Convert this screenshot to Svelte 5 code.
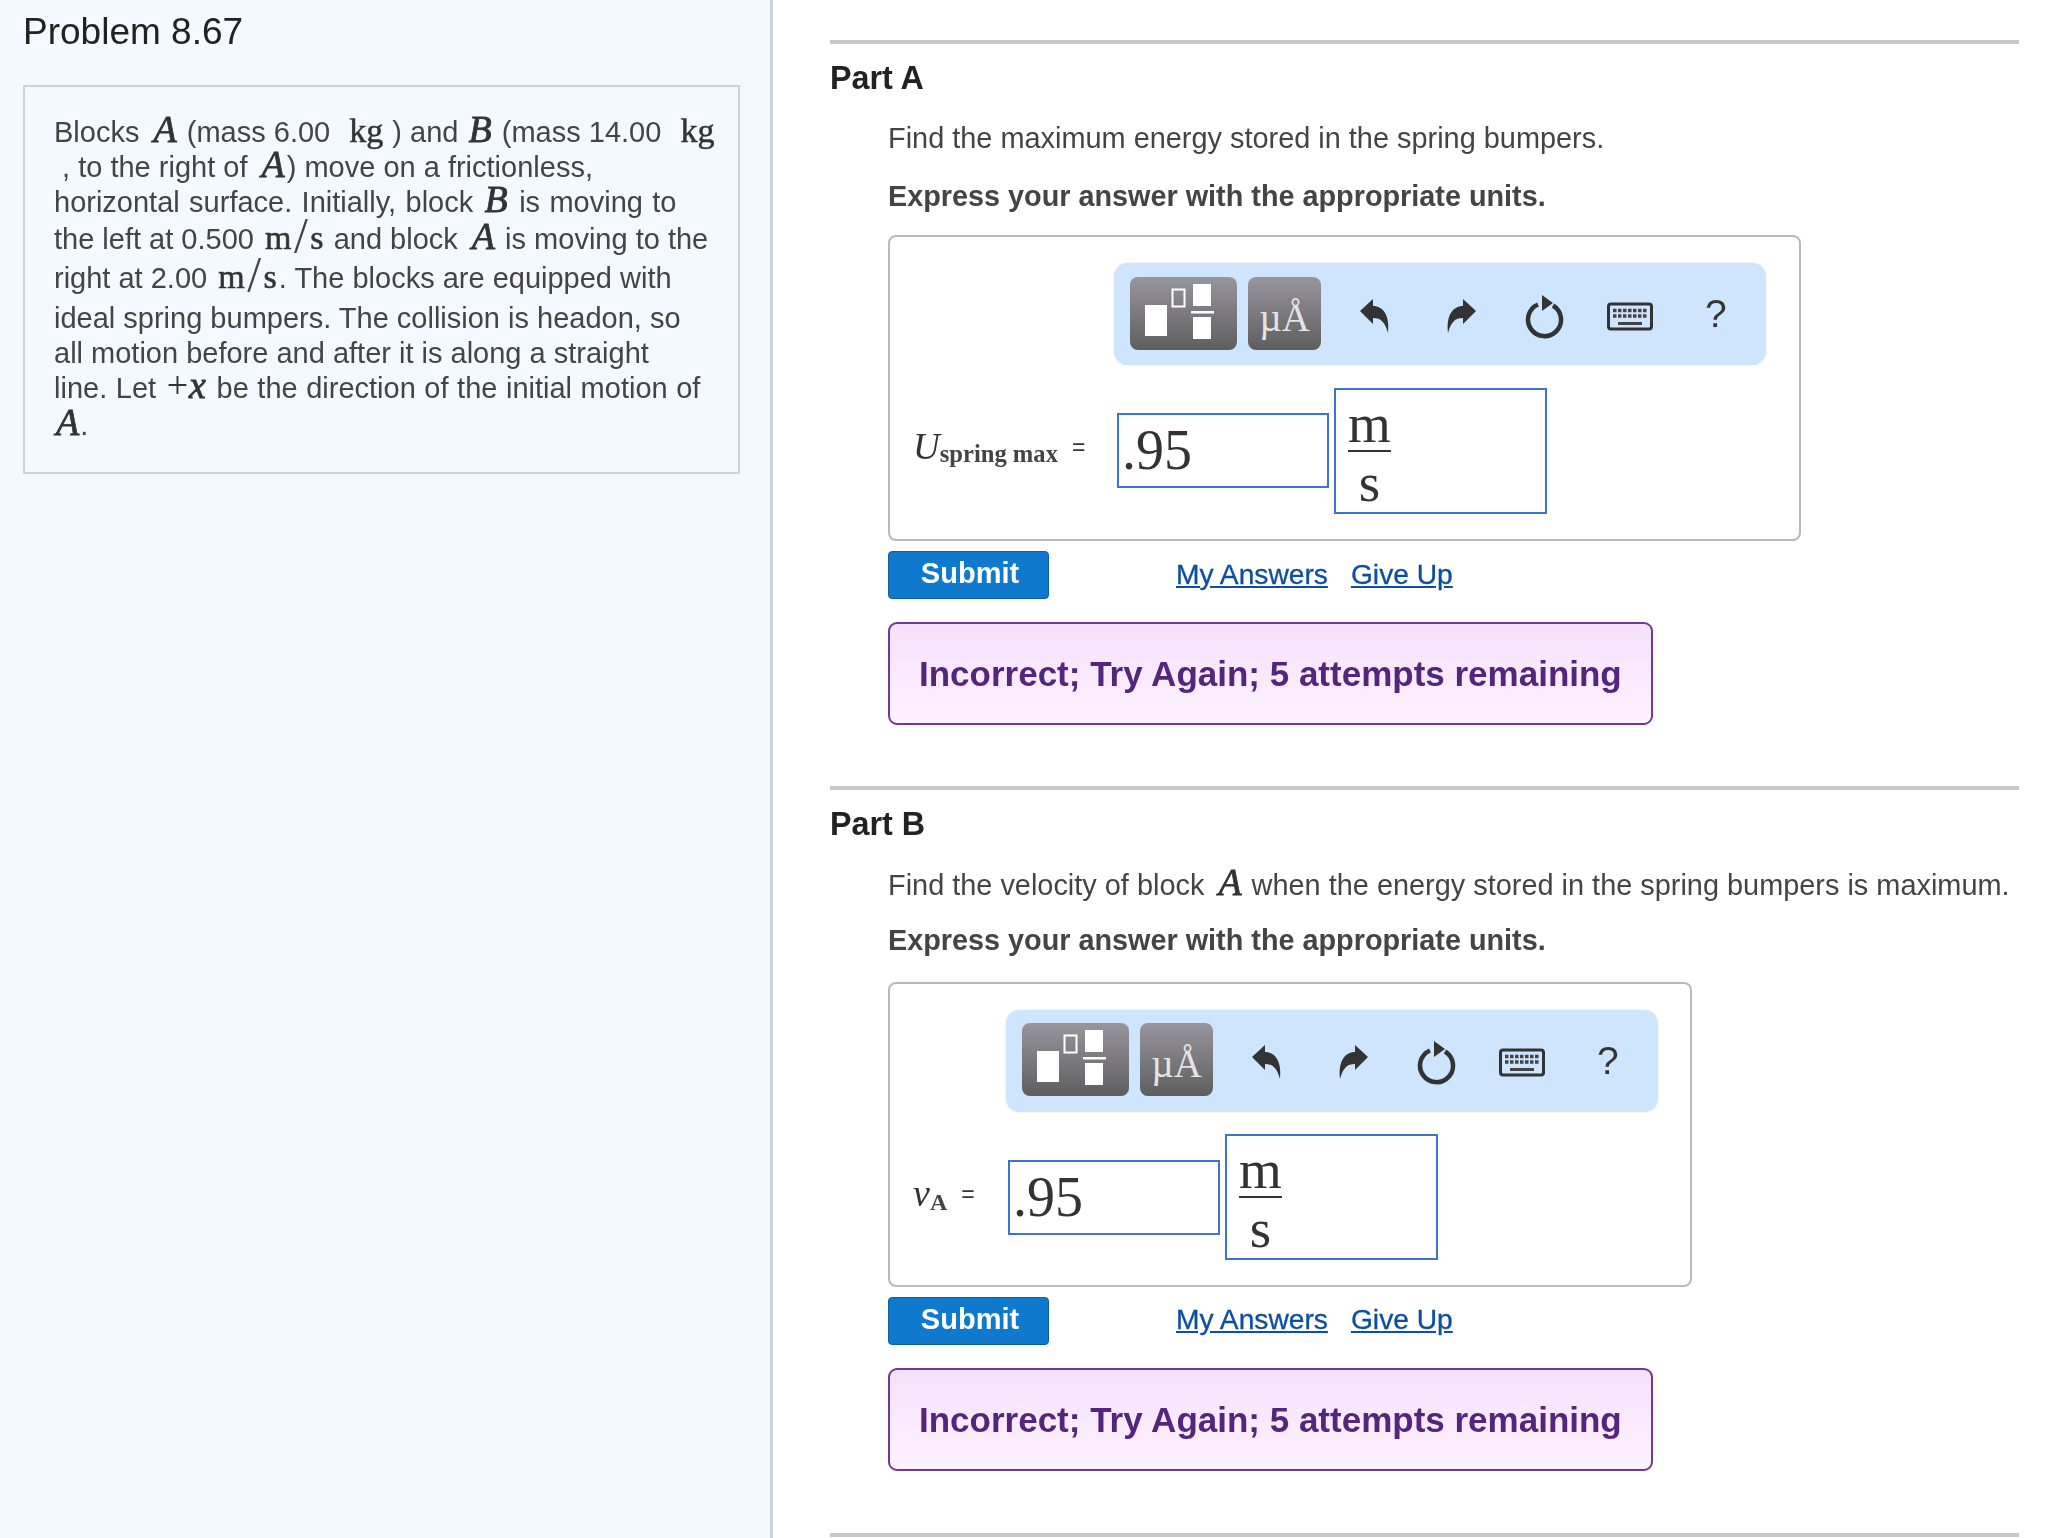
<script>
  const parts = [
    { name: 'Part A', kind: 'u', wide: true },
    { name: 'Part B', kind: 'v', wide: false }
  ];
</script>

<div class="page">
  <aside class="side">
    <h1>Problem 8.67</h1>
    <div class="card">
      <div class="ln">Blocks <i class="mi">A</i> (mass 6.00 <span class="mr gap">kg</span> ) and <i class="mi mb">B</i> (mass 14.00 <span class="mr gap">kg</span></div>
      <div class="ln">&nbsp;, to the right of <i class="mi">A</i>) move on a frictionless,</div>
      <div class="ln l3">horizontal surface. Initially, block <i class="mi mb">B</i> is moving to</div>
      <div class="ln l4">the left at 0.500 <span class="ms"><span class="mr">m</span><span class="sl">/</span><span class="mr">s</span></span> and block <i class="mi">A</i> is moving to the</div>
      <div class="ln l5">right at 2.00 <span class="ms"><span class="mr">m</span><span class="sl">/</span><span class="mr">s</span></span>. The blocks are equipped with</div>
      <div class="ln">ideal spring bumpers. The collision is headon, so</div>
      <div class="ln">all motion before and after it is along a straight</div>
      <div class="ln l8">line. Let <span class="mr plus">+</span><i class="mi mx">x</i> be the direction of the initial motion of</div>
      <div class="ln"><i class="mi mz">A</i>.</div>
    </div>
  </aside>

  <main class="main">
    {#each parts as p}
      <section class="part" class:pb={!p.wide}>
        <h2>{p.name}</h2>
        <div class="body">
          {#if p.kind === 'u'}
            <p class="q">Find the maximum energy stored in the spring bumpers.</p>
          {:else}
            <p class="q">Find the velocity of block <i class="mi">A</i> when the energy stored in the spring bumpers is maximum.</p>
          {/if}
          <p class="ex">Express your answer with the appropriate units.</p>

          <div class="box" class:wide={p.wide}>
            <div class="toolbar">
              <button class="gbtn tmpl" aria-label="templates">
                <svg width="107" height="73" viewBox="0 0 107 73">
                  <rect x="15" y="28" width="22" height="31" fill="#fff"/>
                  <rect x="42.5" y="12.5" width="12" height="17" fill="none" stroke="#fff" stroke-width="2"/>
                  <rect x="63" y="7" width="18" height="22" fill="#fff"/>
                  <rect x="61" y="34" width="23" height="2.5" fill="#fff"/>
                  <rect x="63" y="40" width="18" height="22" fill="#fff"/>
                </svg>
              </button>
              <button class="gbtn sym">µÅ</button>
              <svg class="ic undo" width="40" height="46" viewBox="0 0 40 46">
                <path d="M4 18 L17 6 L17 13 C27 13 34 22 32 40 C29 29 25 25 17 25 L17 31 Z" fill="#333"/>
              </svg>
              <svg class="ic redo" width="40" height="46" viewBox="0 0 40 46">
                <path d="M36 18 L23 6 L23 13 C13 13 6 22 8 40 C11 29 15 25 23 25 L23 31 Z" fill="#333"/>
              </svg>
              <svg class="ic reset" width="40" height="46" viewBox="0 0 40 46">
                <path d="M28 12.5 A16.5 16.5 0 1 1 13 11.5" fill="none" stroke="#333" stroke-width="4.5"/>
                <path d="M17 2 L28 10 L17 18 Z" fill="#333"/>
              </svg>
              <svg class="ic kbd" width="46" height="30" viewBox="0 0 46 30">
                <rect x="1.5" y="2" width="43" height="25" rx="2.5" fill="#cfe4fd" stroke="#333" stroke-width="3"/>
                <path d="M6 8.5 H40 M6 14 H40" stroke="#444" stroke-width="3.4" stroke-dasharray="3.5 1.5"/>
                <path d="M11 21.5 H35" stroke="#444" stroke-width="3"/>
              </svg>
              <span class="qm">?</span>
            </div>
            <div class="ans">
              <span class="lab">
                {#if p.kind === 'u'}
                  <i class="big">U</i><sub>spring max</sub>
                {:else}
                  <i class="big v">v</i><sub class="sa">A</sub>
                {/if}
                <span class="eq">=</span>
              </span>
              <div class="field val">.95</div>
              <div class="field unit">
                <span class="frac"><span class="n">m</span><span class="d">s</span></span>
              </div>
            </div>
          </div>

          <div class="acts">
            <button class="submit">Submit</button>
            <a href="#a" class="lnk first">My Answers</a>
            <a href="#b" class="lnk">Give Up</a>
          </div>
          <div class="msg">Incorrect; Try Again; 5 attempts remaining</div>
        </div>
      </section>
    {/each}
    <div class="endrule"></div>
  </main>
</div>

<style>
  :global(body) { margin: 0; background: #fff; overflow: hidden; }
  .page { display: flex; height: 1538px; overflow: hidden; font-family: "Liberation Sans", Arial, sans-serif; color: #3a3a3a; filter: blur(0.45px); }
  .side { width: 773px; box-sizing: border-box; flex: none; background: #f4f8ff; border-right: 3px solid #c9d3e0; padding: 0 0 0 23px; }
  h1 { margin: 0; padding-top: 9px; height: 85px; box-sizing: border-box; font-size: 37px; line-height: 46px; font-weight: 400; color: #222; }
  .card { width: 717px; height: 389px; box-sizing: border-box; border: 2px solid #c6d4e4; padding: 27px 0 0 29px; }
  .ln { height: 35px; line-height: 36px; font-size: 29px; white-space: nowrap; color: #444; }
  .l3 { height: 36.5px; word-spacing: 1.3px; }
  .l4 { height: 39px; }
  .l5 { height: 40.5px; }
  .l8 { height: 37px; word-spacing: 0.5px; }
  .mi { font-family: "Liberation Serif", serif; font-style: italic; font-size: 38px; color: #333; line-height: 0; -webkit-text-stroke: 0.8px #333; margin: 0 2px 0 6px; }
  .mb { margin: 0 2px; }
  .mx { margin: 0 2px 0 1px; }
  .mz { margin: 0 1px 0 2px; }
  .mr { font-family: "Liberation Serif", serif; font-size: 34px; color: #333; line-height: 0; -webkit-text-stroke: 0.5px #333; }
  .plus { font-size: 38px; -webkit-text-stroke: 0; margin-left: 2px; }
  .gap { margin-left: 11px; margin-right: 1px; }
  .ms { margin: 0 2px 0 3px; }
  .sl { font-family: "Liberation Serif", serif; font-size: 50px; line-height: 0; color: #444; vertical-align: -3px; margin: 0 2.5px; }

  .main { flex: none; width: 1189px; margin-left: 57px; }
  .part { border-top: 4px solid #c8c8c8; margin-top: 40px; height: 705.5px; box-sizing: border-box; }
  h2 { margin: 0; padding-top: 15px; font-size: 32.3px; line-height: 38px; font-weight: 700; color: #222; }
  .body { padding-left: 58px; }
  .q { margin: 23px 0 0; font-size: 28.9px; line-height: 36px; color: #444; white-space: nowrap; }
  .ex { margin: 22px 0 0; font-size: 28.8px; line-height: 36px; font-weight: 700; color: #444; white-space: nowrap; }
  .box { width: 804px; height: 305px; box-sizing: border-box; margin-top: 21px; border: 2px solid #b9b9b9; border-radius: 8px; padding: 26px 0 0 116px; }
  .box.wide { width: 913px; height: 306px; padding-left: 224px; }
  .pb .q { margin-top: 24px; }
  .pb .ex { margin-top: 19px; }
  .pb .box { margin-top: 24px; }
  .toolbar { width: 652px; height: 102px; box-sizing: border-box; background: #cfe4fd; border-radius: 14px; box-shadow: 0 0 2px #ddd; display: flex; align-items: center; padding-left: 16px; }
  .gbtn { border: 0; padding: 0; height: 73px; margin-top: -2px; border-radius: 8px; background: linear-gradient(#98959d, #5e5e5e); display: block; color: #e4e4e6; flex: none; }
  .tmpl { width: 107px; margin-right: 11px; }
  .tmpl svg { display: block; }
  .sym { width: 73px; font-family: "Liberation Serif", serif; font-size: 39px; line-height: 81px; }
  .ic { display: block; flex: none; margin-top: 3px; }
  .undo { margin-left: 35px; }
  .redo { margin-left: 44px; }
  .reset { margin-left: 45px; }
  .kbd { margin-left: 42px; margin-top: 5px; }
  .qm { margin-left: 52px; font-size: 39px; color: #333; }

  .ans { display: flex; align-items: center; margin-top: 23px; height: 125px; margin-left: -93px; }
  .box.wide .ans { margin-left: -201px; }
  .lab { width: 204px; flex: none; white-space: nowrap; font-family: "Liberation Serif", serif; color: #333; position: relative; top: -4px; }
  .box:not(.wide) .lab { width: 95px; }
  .big { font-size: 37px; }
  .v { font-size: 38px; }
  sub { font-size: 24.6px; vertical-align: -3px; line-height: 0; font-weight: 700; color: #444; }
  .sa { font-size: 24px; vertical-align: -4px; }
  .eq { font-family: "Liberation Sans", sans-serif; font-size: 23px; margin-left: 10px; position: relative; top: -4px; }
  .field { box-sizing: border-box; width: 213px; flex: none; border: 2px solid #3e74c9; font-family: "Liberation Serif", serif; color: #333; }
  .val { width: 212px; height: 75px; font-size: 56px; line-height: 70px; padding-left: 3px; margin-right: 5px; }
  .unit { height: 126px; padding: 0 0 0 12px; }
  .frac { display: inline-flex; flex-direction: column; align-items: center; font-size: 55px; }
  .n { border-bottom: 2px solid #333; height: 60px; line-height: 68px; }
  .d { height: 58px; line-height: 62px; }

  .acts { display: flex; align-items: center; margin-top: 10px; height: 48px; }
  .submit { width: 161px; height: 48px; border: 1px solid #0e5f9f; border-radius: 4px; background: #0e79cd; color: #fff; font: 700 29px "Liberation Sans", sans-serif; padding: 0 0 3px 3px; box-sizing: border-box; }
  .lnk { font-size: 28.2px; color: #0b4ea2; text-decoration: underline; -webkit-text-stroke: 0.3px #0b4ea2; position: relative; top: -1px; }
  .first { margin-left: 127px; margin-right: 23px; }
  .msg { box-sizing: border-box; width: 765px; height: 103px; margin-top: 23px; border: 2px solid #6f3a8f; border-radius: 9px; background: linear-gradient(#f4e0fb, #fdf2ff); color: #51267c; font-size: 35px; font-weight: 700; line-height: 99px; padding-left: 29px; white-space: nowrap; }
  .endrule { border-top: 4px solid #c8c8c8; margin-top: 42px; }
</style>
